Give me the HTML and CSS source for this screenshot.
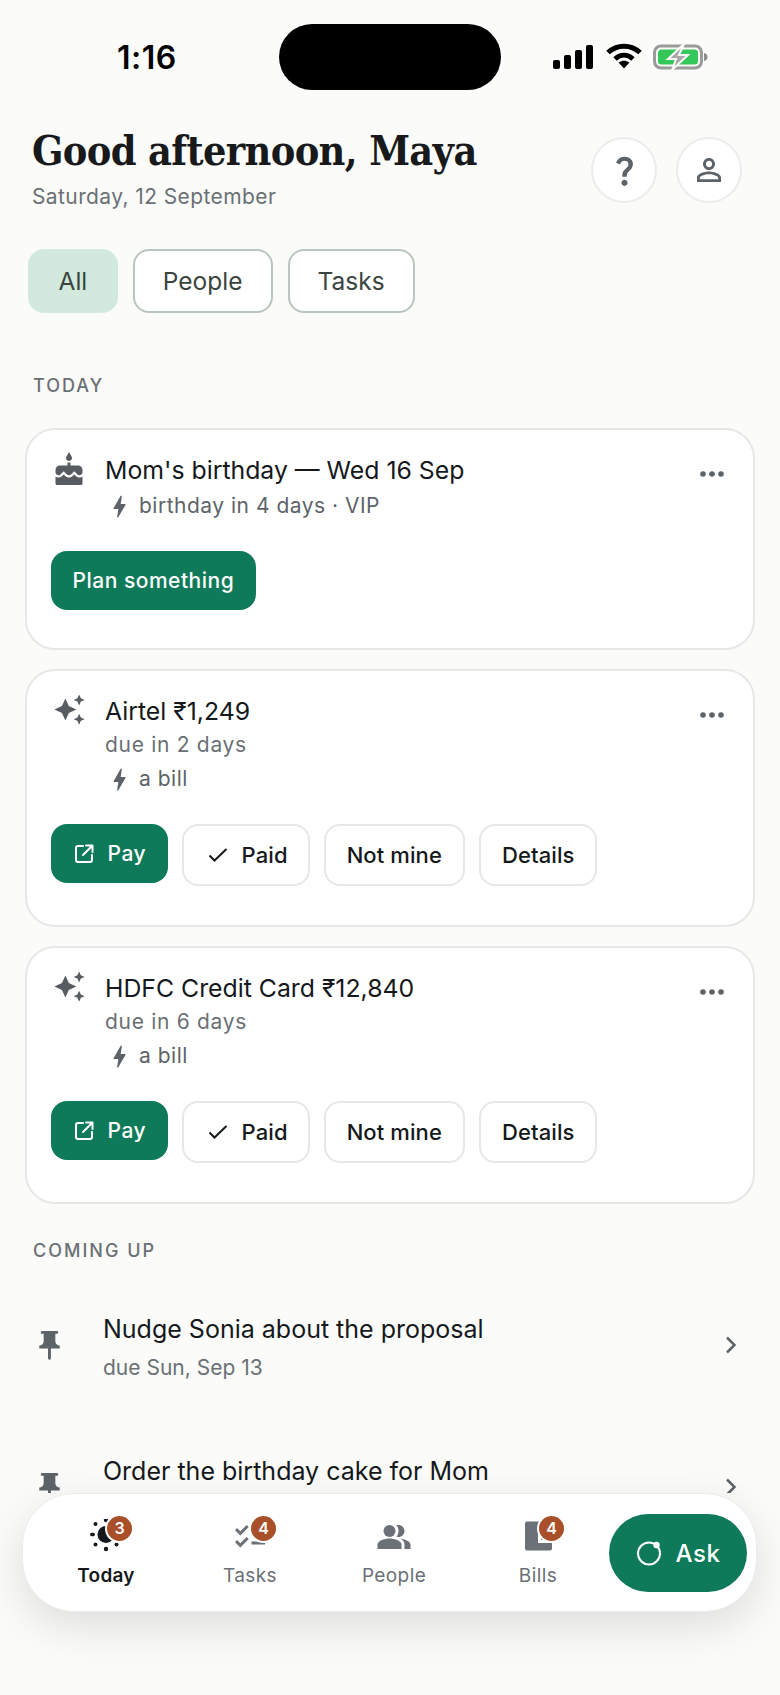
FILE: index.html
```html
<!DOCTYPE html>
<html lang="en">
<head>
    <meta charset="UTF-8">
    <meta name="viewport" content="width=device-width, initial-scale=1.0">
    <title>Today</title>
    <link rel="stylesheet" href="styles.css">
</head>
<body>
<div class="phone">
    <div class="status">
        <div class="time">1:16</div>
        <div class="island"></div>
        <svg class="signal" width="40" height="24" viewBox="0 0 40 24"><rect x="0" y="15" width="7" height="9" rx="2"/><rect x="11" y="10" width="7" height="14" rx="2"/><rect x="22" y="5" width="7" height="19" rx="2"/><rect x="33" y="0" width="7" height="24" rx="2"/></svg>
        <svg class="wifi" width="36" height="26" viewBox="0 0 36 26"><path d="M2 9.500C11 1 25 1 34 9.500" fill="none" stroke="#000" stroke-width="5"/><path d="M9 16c5.500-5 12.500-5 18 0" fill="none" stroke="#000" stroke-width="5"/><path d="M12.500 19.500c3.500-2.500 7.500-2.500 11 0L18 25.500z"/></svg>
        <svg class="battery" width="56" height="26" viewBox="0 0 56 26"><rect x="1.500" y="2" width="47" height="22" rx="6.500" fill="none" stroke="#9a9a9a" stroke-width="3"/><rect x="5" y="5.500" width="40" height="15" rx="3.500" fill="#34c759"/><path d="M51 9c2.500.6 3.500 2 3.500 4s-1 3.400-3.500 4z" fill="#8e8e8e"/><path d="M31 0 15 15h8l-4 11 16-15h-9z" fill="#a8a8a8" stroke="#fbfbf9" stroke-width="2"/></svg>
    </div>

    <header class="top">
        <div class="greet">
            <h1>Good afternoon, Maya</h1>
            <p>Saturday, 12 September</p>
        </div>
        <button class="round"><svg width="37" height="37" viewBox="0 0 24 24"><path d="M11.070 12.850c.77-1.390 2.250-2.210 3.110-3.440.91-1.290.4-3.700-2.180-3.700-1.690 0-2.520 1.280-2.870 2.340L6.540 6.960C7.250 4.830 9.180 3 11.990 3c2.350 0 3.960 1.070 4.780 2.410.7 1.150 1.110 3.300.03 4.900-1.200 1.770-2.350 2.310-2.970 3.450-.25.46-.35.76-.35 2.240h-2.890c-.01-.78-.13-2.050.48-3.150zM14 20c0 1.100-.9 2-2 2s-2-.9-2-2 .9-2 2-2 2 .9 2 2z"/></svg></button>
        <button class="round"><svg width="36" height="36" viewBox="0 0 24 24"><path d="M12 5.900c1.160 0 2.100.94 2.100 2.100s-.94 2.100-2.100 2.100S9.900 9.160 9.900 8s.94-2.100 2.100-2.100m0 9c2.970 0 6.100 1.460 6.100 2.100v1.100H5.900V17c0-.64 3.130-2.100 6.100-2.100M12 4C9.790 4 8 5.790 8 8s1.790 4 4 4 4-1.790 4-4-1.790-4-4-4zm0 9c-2.670 0-8 1.340-8 4v3h16v-3c0-2.660-5.330-4-8-4z"/></svg></button>
    </header>

    <div class="chips">
        <span class="chip active">All</span>
        <span class="chip">People</span>
        <span class="chip">Tasks</span>
    </div>

    <h2 class="label">TODAY</h2>

    <section class="card first">
        <div class="head">
            <div class="lead"><svg width="36" height="36" viewBox="0 0 24 24"><path d="M12 6c1.110 0 2-.9 2-2 0-.38-.1-.73-.29-1.030L12 0l-1.710 2.970c-.19.3-.29.65-.29 1.030 0 1.100.9 2 2 2zm4.600 9.990l-1.070-1.070-1.080 1.070c-1.300 1.300-3.580 1.310-4.890 0l-1.070-1.070-1.090 1.070C6.750 16.640 5.880 17 4.960 17c-.73 0-1.400-.23-1.960-.61V21c0 .55.45 1 1 1h16c.55 0 1-.45 1-1v-4.610c-.56.38-1.230.61-1.960.61-.92 0-1.790-.36-2.440-1.010zM18 9h-5V7h-2v2H6c-1.660 0-3 1.340-3 3v1.540c0 1.080.88 1.960 1.960 1.960.52 0 1.020-.2 1.380-.57l2.140-2.130 2.130 2.130c.74.74 2.030.74 2.770 0l2.140-2.130 2.130 2.130c.37.37.86.57 1.380.57 1.080 0 1.960-.88 1.960-1.960V12C21 10.340 19.660 9 18 9z"/></svg></div>
            <div class="lines">
                <div class="name">Mom's birthday — Wed 16 Sep</div>
                <div class="why"><svg width="29" height="29" viewBox="0 0 24 24"><path d="M11 21h-1l1-7H7.500c-.58 0-.57-.32-.38-.66.19-.34.05-.08.07-.12C8.480 10.940 10.420 7.540 13 3h1l-1 7h3.500c.49 0 .56.33.47.51l-.07.15C12.960 17.550 11 21 11 21z"/></svg>birthday in 4 days · VIP</div>
            </div>
            <svg class="dots" width="24" height="6" viewBox="0 0 24 6"><circle cx="3" cy="3" r="2.800"/><circle cx="12" cy="3" r="2.800"/><circle cx="21" cy="3" r="2.800"/></svg>
        </div>
        <div class="actions"><button class="btn primary">Plan something</button></div>
    </section>

    <section class="card">
        <div class="head">
            <div class="lead"><svg width="33" height="33" viewBox="0 0 24 24"><path d="M19 9l1.250-2.750L23 5l-2.750-1.250L19 1l-1.250 2.750L15 5l2.750 1.250L19 9zm-7.500.5L9 4 6.500 9.500 1 12l5.500 2.500L9 20l2.500-5.500L17 12l-5.500-2.500zM19 15l-1.250 2.750L15 19l2.750 1.250L19 23l1.250-2.750L23 19l-2.750-1.250L19 15z"/></svg></div>
            <div class="lines">
                <div class="name">Airtel ₹1,249</div>
                <div class="due">due in 2 days</div>
                <div class="why"><svg width="29" height="29" viewBox="0 0 24 24"><path d="M11 21h-1l1-7H7.500c-.58 0-.57-.32-.38-.66.19-.34.05-.08.07-.12C8.480 10.940 10.420 7.540 13 3h1l-1 7h3.500c.49 0 .56.33.47.51l-.07.15C12.960 17.550 11 21 11 21z"/></svg>a bill</div>
            </div>
            <svg class="dots" width="24" height="6" viewBox="0 0 24 6"><circle cx="3" cy="3" r="2.800"/><circle cx="12" cy="3" r="2.800"/><circle cx="21" cy="3" r="2.800"/></svg>
        </div>
        <div class="actions">
            <button class="btn primary"><svg width="22" height="22" viewBox="0 0 22 22" fill="none" stroke="#fff" stroke-width="2" stroke-linecap="round" stroke-linejoin="round"><path d="M10 3H5a2 2 0 0 0-2 2v12a2 2 0 0 0 2 2h12a2 2 0 0 0 2-2v-5"/><path d="M13 2.500h6.500V9M19.500 2.500 10 12"/></svg>Pay</button>
            <button class="btn paid"><svg width="20" height="14" viewBox="0 0 20 14" fill="none" stroke="#15191c" stroke-width="2"><path d="M1.500 7.500 6.500 12.500 18.500 1"/></svg>Paid</button>
            <button class="btn">Not mine</button>
            <button class="btn">Details</button>
        </div>
    </section>

    <section class="card">
        <div class="head">
            <div class="lead"><svg width="33" height="33" viewBox="0 0 24 24"><path d="M19 9l1.250-2.750L23 5l-2.750-1.250L19 1l-1.250 2.750L15 5l2.750 1.250L19 9zm-7.500.5L9 4 6.500 9.500 1 12l5.500 2.500L9 20l2.500-5.500L17 12l-5.500-2.500zM19 15l-1.250 2.750L15 19l2.750 1.250L19 23l1.250-2.750L23 19l-2.750-1.250L19 15z"/></svg></div>
            <div class="lines">
                <div class="name">HDFC Credit Card ₹12,840</div>
                <div class="due">due in 6 days</div>
                <div class="why"><svg width="29" height="29" viewBox="0 0 24 24"><path d="M11 21h-1l1-7H7.500c-.58 0-.57-.32-.38-.66.19-.34.05-.08.07-.12C8.480 10.940 10.420 7.540 13 3h1l-1 7h3.500c.49 0 .56.33.47.51l-.07.15C12.960 17.550 11 21 11 21z"/></svg>a bill</div>
            </div>
            <svg class="dots" width="24" height="6" viewBox="0 0 24 6"><circle cx="3" cy="3" r="2.800"/><circle cx="12" cy="3" r="2.800"/><circle cx="21" cy="3" r="2.800"/></svg>
        </div>
        <div class="actions">
            <button class="btn primary"><svg width="22" height="22" viewBox="0 0 22 22" fill="none" stroke="#fff" stroke-width="2" stroke-linecap="round" stroke-linejoin="round"><path d="M10 3H5a2 2 0 0 0-2 2v12a2 2 0 0 0 2 2h12a2 2 0 0 0 2-2v-5"/><path d="M13 2.500h6.500V9M19.500 2.500 10 12"/></svg>Pay</button>
            <button class="btn paid"><svg width="20" height="14" viewBox="0 0 20 14" fill="none" stroke="#15191c" stroke-width="2"><path d="M1.500 7.500 6.500 12.500 18.500 1"/></svg>Paid</button>
            <button class="btn">Not mine</button>
            <button class="btn">Details</button>
        </div>
    </section>

    <h2 class="label coming">COMING UP</h2>

    <div class="task">
        <svg class="pin" width="35" height="35" viewBox="0 0 24 24"><path d="M16 9V4h1c.55 0 1-.45 1-1s-.45-1-1-1H7c-.55 0-1 .45-1 1s.45 1 1 1h1v5c0 1.660-1.340 3-3 3v2h5.970v7l1 1 1-1v-7H19v-2c-1.660 0-3-1.340-3-3z"/></svg>
        <div class="task-text">
            <div class="task-name">Nudge Sonia about the proposal</div>
            <div class="task-due">due Sun, Sep 13</div>
        </div>
        <svg class="chev" width="14" height="20" viewBox="0 0 14 20" fill="none" stroke-width="2.500"><path d="M3 2.500 10.500 10 3 17.500"/></svg>
    </div>
    <div class="task">
        <svg class="pin" width="35" height="35" viewBox="0 0 24 24"><path d="M16 9V4h1c.55 0 1-.45 1-1s-.45-1-1-1H7c-.55 0-1 .45-1 1s.45 1 1 1h1v5c0 1.660-1.340 3-3 3v2h5.970v7l1 1 1-1v-7H19v-2c-1.660 0-3-1.340-3-3z"/></svg>
        <div class="task-text">
            <div class="task-name">Order the birthday cake for Mom</div>
        </div>
        <svg class="chev" width="14" height="20" viewBox="0 0 14 20" fill="none" stroke-width="2.500"><path d="M3 2.500 10.500 10 3 17.500"/></svg>
    </div>

    <div class="dock">
        <nav class="nav">
            <div class="tab current">
                <div class="tab-icon">
                    <svg width="36" height="36" viewBox="0 0 36 36"><circle cx="18" cy="15.500" r="8.500"/><circle cx="18" cy="1" r="2.200"/><circle cx="18" cy="30" r="2.200"/><rect x="2" y="13.800" width="5" height="3.400" rx="1.700"/><circle cx="7.500" cy="5" r="2"/><circle cx="7.500" cy="25.500" r="2"/><circle cx="28.500" cy="25.500" r="2"/></svg>
                    <span class="badge">3</span>
                </div>
                <span class="tab-label">Today</span>
            </div>
            <div class="tab">
                <div class="tab-icon">
                    <svg width="36" height="36" viewBox="0 0 24 24"><path d="M22 7h-9v2h9V7zm0 8h-9v2h9v-2zM5.540 11L2 7.460l1.410-1.410 2.120 2.120 4.240-4.240 1.410 1.410L5.540 11zm0 8L2 15.460l1.410-1.410 2.120 2.120 4.240-4.240 1.410 1.410L5.540 19z"/></svg>
                    <span class="badge">4</span>
                </div>
                <span class="tab-label">Tasks</span>
            </div>
            <div class="tab">
                <div class="tab-icon">
                    <svg width="36" height="36" viewBox="0 0 24 24"><path fill-rule="evenodd" d="M16.670 13.130C18.040 14.060 19 15.320 19 17v3h4v-3c0-2.180-3.570-3.470-6.330-3.870z"/><circle cx="9" cy="8" r="4"/><path d="M15 12c2.210 0 4-1.790 4-4s-1.790-4-4-4c-.47 0-.91.1-1.330.24C14.500 5.270 15 6.580 15 8s-.5 2.730-1.330 3.760c.42.14.86.24 1.330.24z"/><path d="M9 13c-2.670 0-8 1.340-8 4v3h16v-3c0-2.660-5.330-4-8-4z"/></svg>
                </div>
                <span class="tab-label">People</span>
            </div>
            <div class="tab">
                <div class="tab-icon">
                    <svg width="36" height="36" viewBox="0 0 36 36"><path d="M7 2.500h23a2 2 0 0 1 2 2v25a2 2 0 0 1-2 2H7a2 2 0 0 1-2-2v-25a2 2 0 0 1 2-2z"/><path d="M18 9h14v15H18z" fill="#fff"/><path d="M21 12h11v9H21z"/></svg>
                    <span class="badge">4</span>
                </div>
                <span class="tab-label">Bills</span>
            </div>
            <button class="ask"><svg width="26" height="26" viewBox="0 0 26 26" fill="none" stroke="#fff" stroke-width="2"><circle cx="13" cy="13.500" r="11"/><circle cx="20.500" cy="5" r="3.200" fill="#fff" stroke="none"/></svg>Ask</button>
        </nav>
    </div>
</div>
</body>
</html>
```

FILE: styles.css
```css
* {
    box-sizing: border-box;
}

body {
    margin: 0;
    background: #fbfbf9;
    font-family: Inter, "Noto Sans", sans-serif;
    color: #15191c;
}

button {
    font-family: inherit;
}

.phone {
    position: relative;
    width: 780px;
    height: 1695px;
    overflow: hidden;
}

/* status bar */
.status {
    display: flex;
    align-items: center;
    height: 66px;
    margin-top: 24px;
}

.status .time {
    width: 279px;
    padding-left: 117px;
    font-size: 32px;
    font-weight: 600;
    letter-spacing: 0.5px;
    color: #000;
}

.island {
    width: 222px;
    height: 66px;
    border-radius: 33px;
    background: #000;
}

.signal {
    margin-left: 52px;
}

.wifi {
    margin-left: 13px;
    margin-top: -2px;
}

.battery {
    margin-left: 11px;
}

/* header */
.top {
    display: flex;
    align-items: flex-start;
    gap: 19px;
    padding: 31px 38px 0 32px;
}

.greet {
    flex: 1;
}

.greet h1 {
    margin: 0;
    padding-top: 5px;
    font-family: "DejaVu Serif Condensed", "Liberation Serif", serif;
    font-size: 41px;
    font-weight: 700;
    line-height: 50px;
    letter-spacing: -0.65px;
    color: #17191b;
}

.greet p {
    margin: 7px 0 0;
    font-size: 21px;
    line-height: 28px;
    color: #6a7075;
    letter-spacing: 0.4px;
}

.round {
    display: flex;
    align-items: center;
    justify-content: center;
    width: 66px;
    height: 66px;
    margin-top: 16px;
    padding: 0;
    border: 2px solid #ececea;
    border-radius: 50%;
    background: #fff;
}

.round svg {
    fill: #5c6369;
}

/* filter chips */
.chips {
    display: flex;
    gap: 15px;
    padding: 38px 0 0 28px;
}

.chip {
    display: flex;
    align-items: center;
    height: 64px;
    padding: 0 28px;
    border: 2px solid #b9c6bd;
    border-radius: 16px;
    background: #fff;
    font-size: 24.500px;
    color: #3b4540;
}

.chip.active {
    border-color: #d1eadd;
    background: #d1eadd;
    padding: 0 28.500px;
}

.label {
    margin: 60px 0 29px 33px;
    font-size: 18px;
    font-weight: 500;
    line-height: 26px;
    letter-spacing: 2px;
    color: #6a7075;
}

.label.coming {
    margin: 34px 0 10px 33px;
}

/* cards */
.card {
    width: 730px;
    height: 258px;
    margin: 0 0 19px 25px;
    padding: 22px 26px 0 24px;
    border: 2px solid #e7e8e6;
    border-radius: 30px;
    background: #fff;
}

.card.first {
    height: 222px;
}

.head {
    display: flex;
    align-items: flex-start;
}

.lead {
    flex: none;
    display: flex;
    justify-content: center;
    width: 36px;
}

.lead svg {
    fill: #565c62;
}

.lines {
    flex: 1;
    margin-left: 18px;
}

.name {
    font-size: 24.800px;
    line-height: 36px;
    color: #15191c;
}

.due {
    margin-top: 1px;
    font-size: 21px;
    line-height: 30px;
    color: #6a7075;
    letter-spacing: 0.7px;
}

.why {
    display: flex;
    align-items: center;
    margin-top: 4px;
    font-size: 21px;
    line-height: 30px;
    color: #5d6469;
    letter-spacing: 0.5px;
}

.first .why {
    margin-top: 3px;
}

.why svg {
    margin-right: 5px;
    fill: #5c6369;
}

.dots {
    margin: 19px 3px 0 0;
    fill: #5c6369;
}

.actions {
    display: flex;
    align-items: flex-start;
    gap: 14px;
    margin-top: 30px;
}

.btn {
    display: flex;
    align-items: center;
    gap: 13px;
    height: 62px;
    padding: 0 21px;
    border: 2px solid #e7e8e6;
    border-radius: 16px;
    background: #fff;
    font-size: 22px;
    font-weight: 500;
    letter-spacing: 0.1px;
    color: #15191c;
}

.btn.paid {
    gap: 14px;
    padding: 0 20px 0 24px;
}

.btn.primary {
    height: 59px;
    padding: 0 21.500px;
    border: 0;
    background: #0f7a59;
    font-size: 21px;
    color: #fff;
    letter-spacing: 0.5px;
}

/* coming up */
.task {
    display: flex;
    align-items: center;
    height: 142px;
    padding: 0 42px 0 32px;
}

.pin {
    flex: none;
    fill: #5c6369;
}

.task-text {
    flex: 1;
    height: 74px;
    margin-left: 36px;
    padding-top: 4px;
}

.task-name {
    font-size: 25px;
    line-height: 34px;
}

.task-due {
    margin-top: 8px;
    font-size: 21px;
    line-height: 28px;
    color: #6a7075;
}

.chev {
    flex: none;
    stroke: #5c6369;
}

/* bottom nav */
.dock {
    position: absolute;
    left: 0;
    right: 0;
    bottom: 0;
    height: 202px;
    padding: 0 23px 0 22px;
    background: #fbfbf9;
}

.nav {
    display: flex;
    align-items: flex-start;
    height: 119px;
    padding: 20px 11px 0;
    border-radius: 52px;
    background: #fff;
    border: 1px solid #ececea;
    box-shadow: 0 14px 44px rgba(0, 0, 0, 0.12);
}

.tab {
    flex: none;
    width: 144px;
    text-align: center;
    font-size: 19px;
    letter-spacing: 0.4px;
    line-height: 26px;
    color: #6a7075;
}

.tab.current {
    font-weight: 600;
    letter-spacing: 0.2px;
    color: #15191c;
}

.tab-icon {
    position: relative;
    width: 36px;
    height: 36px;
    margin: 5px auto 8px;
}

.tab-icon svg {
    display: block;
    fill: #6b7176;
}

.tab.current .tab-icon svg {
    fill: #15191c;
}

.badge {
    position: absolute;
    left: 19px;
    top: -3px;
    width: 25px;
    height: 25px;
    border-radius: 50%;
    background: #a94f2a;
    box-shadow: 0 0 0 2px #fff;
    color: #fff;
    font-size: 16px;
    font-weight: 600;
    line-height: 25px;
    letter-spacing: 0;
}

.ask {
    display: flex;
    align-items: center;
    justify-content: center;
    gap: 14px;
    flex: none;
    width: 138px;
    height: 78px;
    margin-left: -1px;
    border: 0;
    border-radius: 39px;
    background: #0f7a59;
    color: #fff;
    font-size: 24px;
    font-weight: 500;
    letter-spacing: 0.5px;
}
```
